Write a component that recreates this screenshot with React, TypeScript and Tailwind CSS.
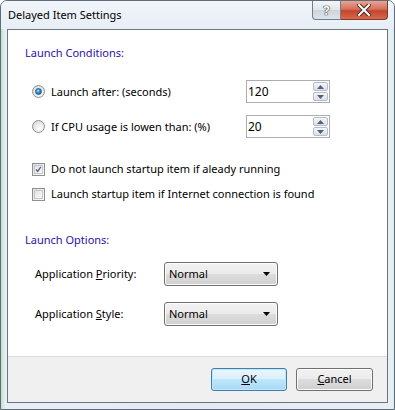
import React from 'react'

const font = { fontFamily: '"Noto Sans", "Open Sans", sans-serif' }

function Radio({ checked }: { checked?: boolean }) {
  return (
    <span className="w-[13px] h-[13px] rounded-full border border-[#8e8f8f] bg-[radial-gradient(circle_at_60%_65%,#ffffff_0%,#e4e4e4_60%,#cfcfcf_100%)] flex items-center justify-center shrink-0">
      {checked && (
        <span className="w-[7px] h-[7px] rounded-full bg-[radial-gradient(circle_at_40%_35%,#9fe3ff_0%,#2f8fd6_45%,#0b4f8f_100%)] border border-[#1d5a8a]" />
      )}
    </span>
  )
}

function Check({ checked }: { checked?: boolean }) {
  return (
    <span className="w-[13px] h-[13px] border border-[#8e8f8f] bg-[linear-gradient(135deg,#dcdcdc,#fdfdfd)] flex items-center justify-center shrink-0">
      <span className="w-[9px] h-[9px] border border-[#c6c6c6] bg-[linear-gradient(135deg,#e2e2e2,#fafafa)] flex items-center justify-center">
        {checked && (
          <svg width="9" height="9" viewBox="0 0 9 9">
            <path d="M1.5 4.5 L3.5 7 L7.5 1.2" fill="none" stroke="#4a5f97" strokeWidth="1.6" />
          </svg>
        )}
      </span>
    </span>
  )
}

function Spin({ value }: { value: string }) {
  return (
    <div className="w-[84px] h-[23px] border border-[#abadb3] bg-white flex items-center pl-[1px] pr-[1px]">
      <span className="flex-1 text-[12px] text-black leading-none">{value}</span>
      <div className="flex flex-col gap-[1px] w-[15px]">
        {[0, 1].map((i) => (
          <div
            key={i}
            className="h-[9px] border border-[#b7bcc6] rounded-[2px] bg-[linear-gradient(#f6f6f6,#dcdfe6)] flex items-center justify-center"
          >
            <svg width="7" height="4" viewBox="0 0 7 4">
              <path d={i === 0 ? 'M0 4 L3.5 0 L7 4 Z' : 'M0 0 L3.5 4 L7 0 Z'} fill="#4d6185" />
            </svg>
          </div>
        ))}
      </div>
    </div>
  )
}

function Combo() {
  return (
    <div className="w-[114px] h-[24px] rounded-[3px] border border-[#707070] bg-[linear-gradient(#f2f2f2_0%,#ebebeb_50%,#dddddd_50%,#cfcfcf_100%)] flex items-center pl-[4px] pr-[7px] shadow-[inset_0_0_0_1px_#fcfcfc]">
      <span className="flex-1 text-[11px] text-black">Normal</span>
      <svg width="7" height="4" viewBox="0 0 7 4">
        <path d="M0 0 L7 0 L3.5 4 Z" fill="#000" />
      </svg>
    </div>
  )
}

export default function App() {
  return (
    <div
      style={font}
      className="w-[395px] h-[410px] flex flex-col rounded-t-[7px] border border-[#5d6b7b] bg-[linear-gradient(90deg,#bfe3c4_0px,#e8eef6_4px,#e4ebf4_50%,#e8eef6_391px,#c4e4c7_395px)] overflow-hidden"
    >
      <div className="h-[28px] flex items-start shrink-0 bg-[linear-gradient(#f1f5fa,#e8eef6)]">
        <span className="pl-[7px] pt-[6px] text-[11px] leading-[16px] text-black">Delayed Item Settings</span>
        <div className="ml-auto mr-[6px] flex">
          <div className="w-[29px] h-[19px] border border-[#6f7d8c] border-t-0 rounded-bl-[4px] bg-[linear-gradient(#f3f5f8_0%,#e0e5ea_50%,#cdd4db_51%,#dde3e9_100%)] flex items-center justify-center text-[13px] font-bold text-white leading-none [text-shadow:0_0_1px_#2b3440,0_0_1px_#2b3440,0_0_1px_#2b3440]">
            ?
          </div>
          <div className="w-[47px] h-[19px] border border-[#7a3a2e] border-t-0 border-l-0 rounded-br-[4px] bg-[linear-gradient(#e8a493_0%,#d4705a_45%,#c2452b_55%,#d86a4a_100%)] flex items-center justify-center">
            <svg width="14" height="12" viewBox="0 0 14 12">
              <path d="M2 1 L12 11 M12 1 L2 11" stroke="#4b2a22" strokeWidth="4" strokeLinecap="square" />
              <path d="M2 1 L12 11 M12 1 L2 11" stroke="#ffffff" strokeWidth="2" strokeLinecap="square" />
            </svg>
          </div>
        </div>
      </div>

      <div className="flex-1 mx-[6px] mb-[6px] border border-[#6b7580] bg-white flex flex-col">
        <div className="flex-1 flex flex-col pl-[17px] pr-[57px] text-[11px] leading-[16px]">
          <div className="mt-[15px] text-[#2e0fa8]">Launch Conditions:</div>

          <div className="mt-[19px] flex items-center h-[23px] pl-[7px]">
            <Radio checked />
            <span className="ml-[6px] flex-1 text-black">Launch after: (seconds)</span>
            <Spin value="120" />
          </div>
          <div className="mt-[12px] flex items-center h-[23px] pl-[7px]">
            <Radio />
            <span className="ml-[6px] flex-1 text-black">If CPU usage is lowen than: (%)</span>
            <Spin value="20" />
          </div>

          <div className="mt-[24px] flex items-center h-[14px] pl-[7px] whitespace-nowrap">
            <Check checked />
            <span className="ml-[6px] text-black">Do not launch startup item if aleady running</span>
          </div>
          <div className="mt-[11px] flex items-center h-[14px] pl-[7px] whitespace-nowrap">
            <Check />
            <span className="ml-[6px] text-black">Launch startup item if Internet connection is found</span>
          </div>

          <div className="mt-[31px] text-[#2e0fa8]">Launch Options:</div>

          <div className="mt-[14px] flex items-center h-[24px] pl-[10px]">
            <span className="w-[129px] text-black">
              Application <span className="underline">P</span>riority:
            </span>
            <Combo />
          </div>
          <div className="mt-[16px] flex items-center h-[24px] pl-[10px]">
            <span className="w-[129px] text-black">
              Application <span className="underline">S</span>tyle:
            </span>
            <Combo />
          </div>
        </div>

        <div className="h-[46px] border-t border-[#dfdfdf] bg-[#f0f0f0] flex items-center justify-end gap-[9px] pr-[14px] text-[11px]">
          <button className="w-[76px] h-[23px] rounded-[3px] border border-[#3c7fb1] bg-[linear-gradient(#eaf6fd_0%,#d9f0fc_50%,#bee6fd_50%,#a7d9f5_100%)] shadow-[inset_0_0_0_1px_#c4e5f6] text-black">
            <span className="underline">O</span>K
          </button>
          <button className="w-[77px] h-[23px] rounded-[3px] border border-[#707070] bg-[linear-gradient(#f2f2f2_0%,#ebebeb_50%,#dddddd_50%,#cfcfcf_100%)] shadow-[inset_0_0_0_1px_#fcfcfc] text-black">
            <span className="underline">C</span>ancel
          </button>
        </div>
      </div>
    </div>
  )
}
